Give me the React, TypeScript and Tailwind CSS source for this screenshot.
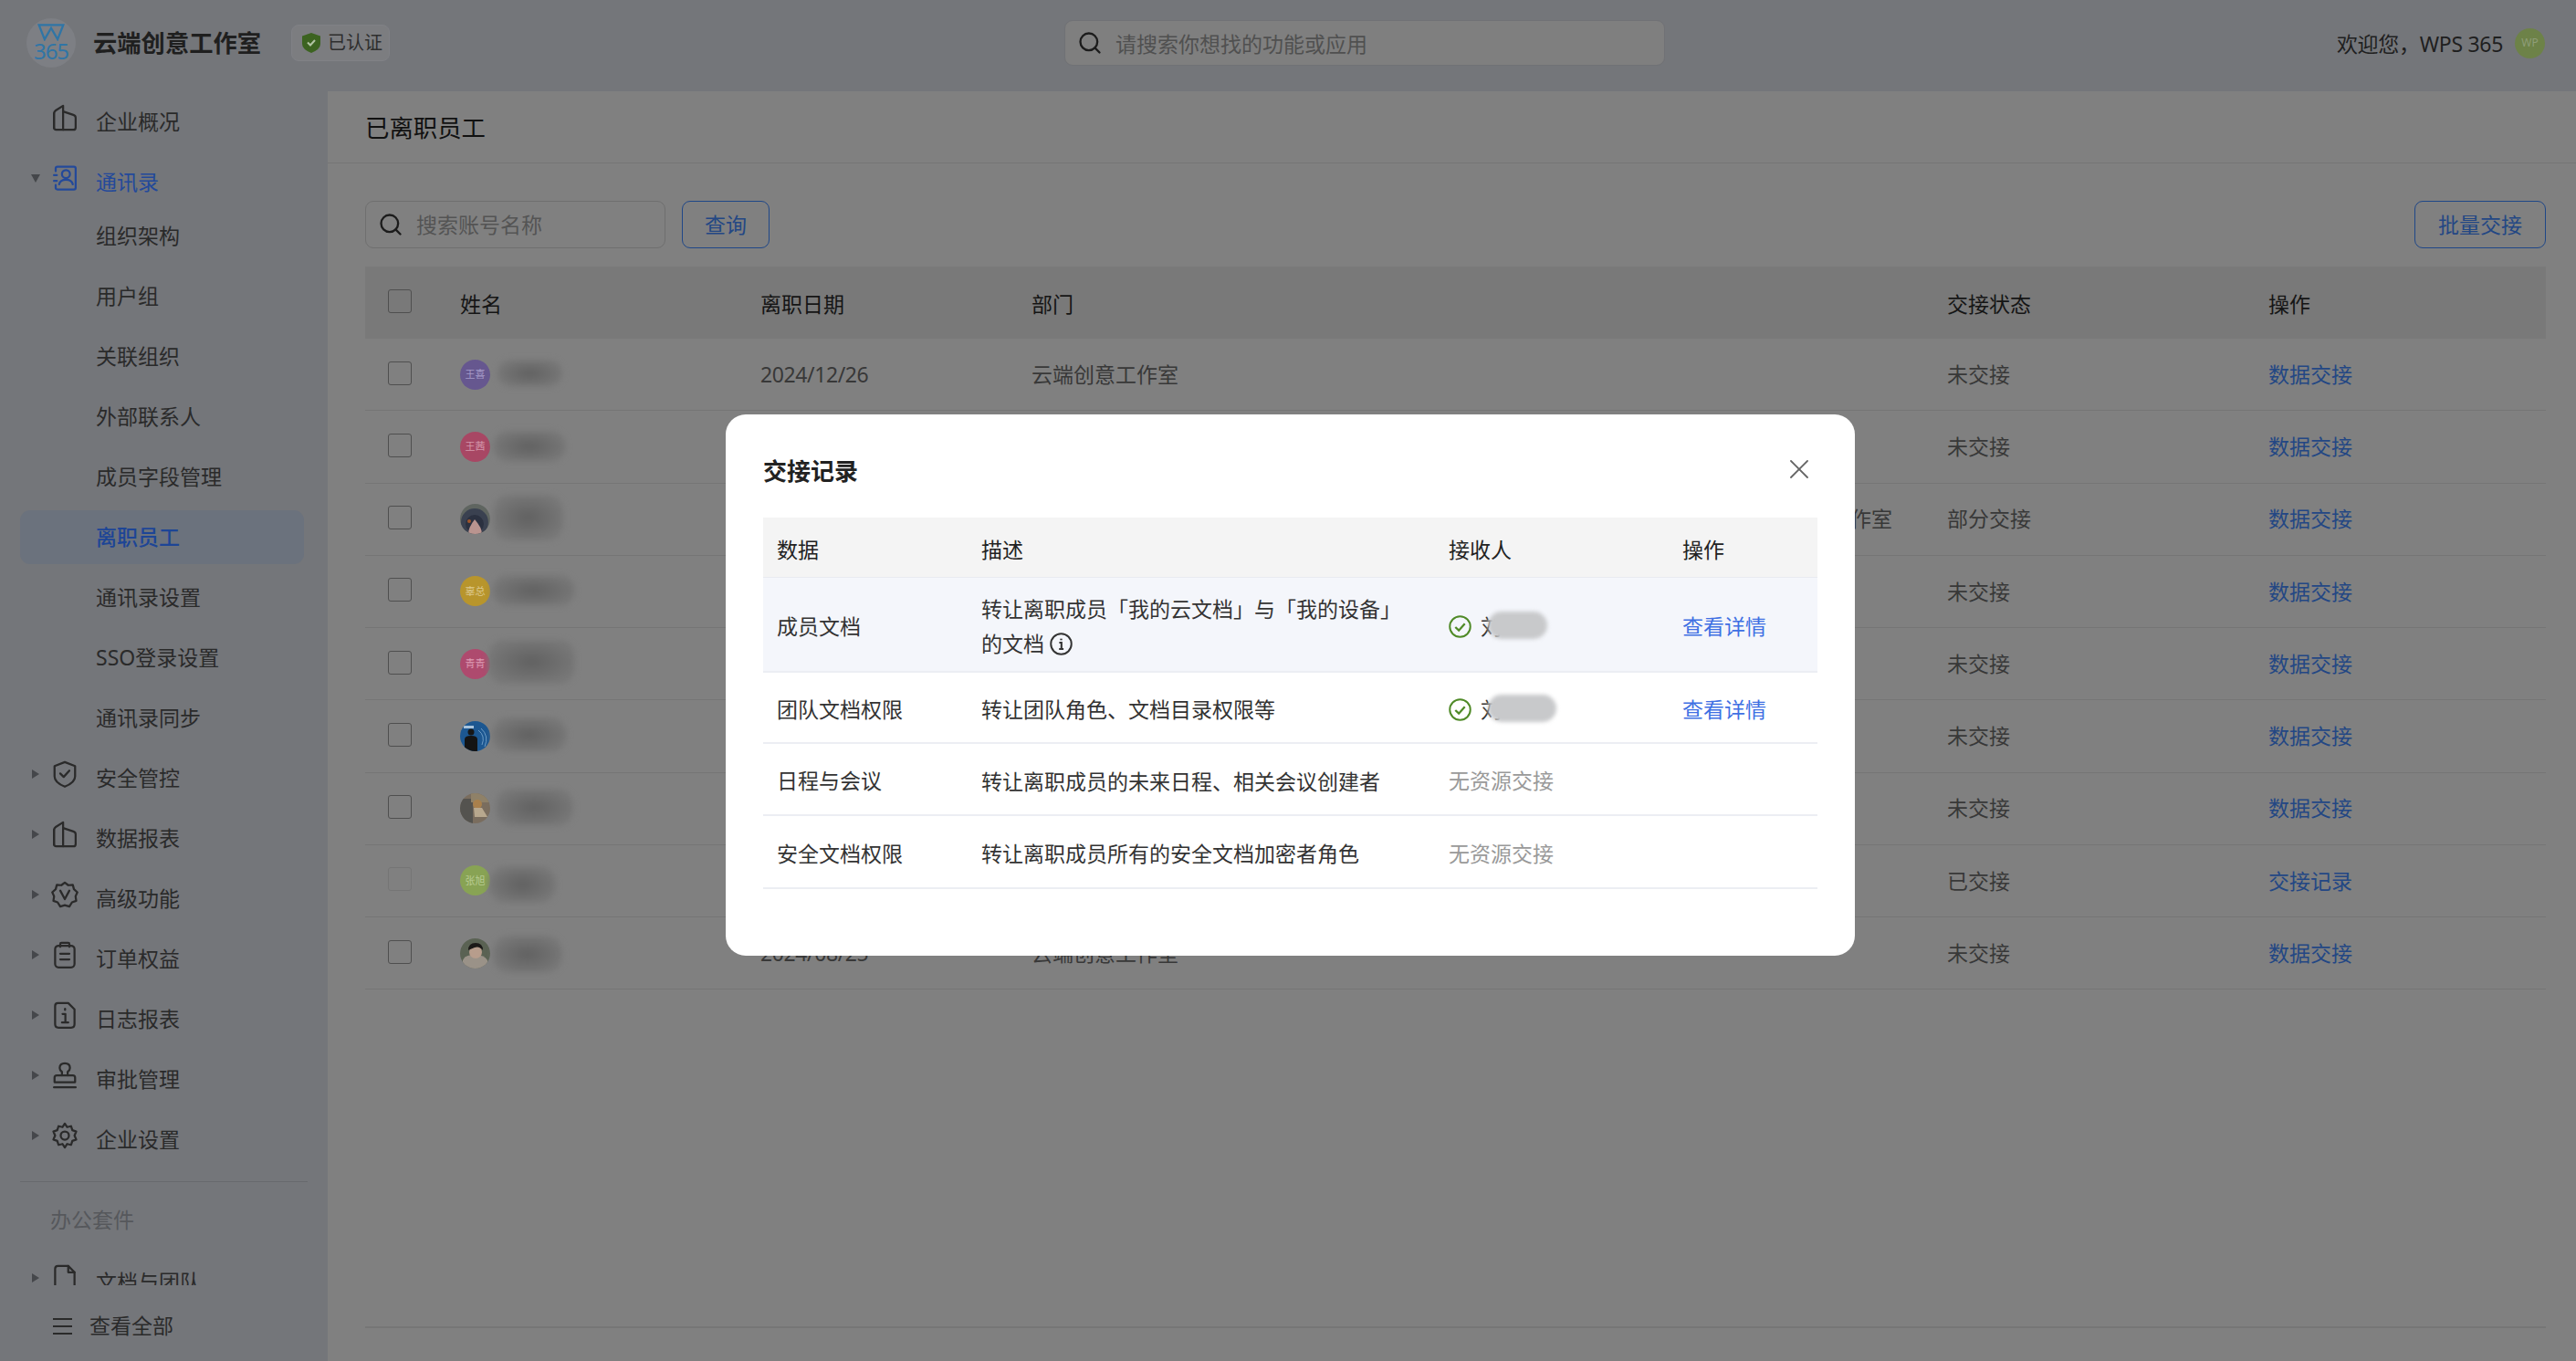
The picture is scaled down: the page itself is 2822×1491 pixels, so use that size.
import React from 'react';
import { Search, X } from 'lucide-react';

const stroke = {
  fill: 'none',
  stroke: 'currentColor',
  strokeWidth: 1.8,
  strokeLinecap: 'round' as const,
  strokeLinejoin: 'round' as const,
};

const Icon: React.FC<{ children: React.ReactNode; className?: string }> = ({ children, className = 'w-[30px] h-[32px]' }) => (
  <svg viewBox="0 0 24 24" className={className} {...stroke}>
    {children}
  </svg>
);

const BuildingIcon = () => (
  <Icon>
    <path d="M2.5 21V8.5Q2.5 6.6 4 5.6L10.5 1.5V22.5" />
    <path d="M10.5 6.5L19.5 9.5Q21.5 10.2 21.5 12V20.5Q21.5 22.5 19.5 22.5H4.5Q2.5 22.5 2.5 20.5V8" />
  </Icon>
);
const ContactIcon = () => (
  <Icon>
    <path d="M4 6V3.5Q4 2 5.5 2H20Q21.5 2 21.5 3.5V20.5Q21.5 22 20 22H5.5Q4 22 4 20.5V18" />
    <circle cx="13" cy="8.5" r="3.5" />
    <path d="M7 17.5Q8 13.5 13 13.5T19 17.5" />
    <path d="M2.5 9.5H5M2.5 14.5H5" />
  </Icon>
);
const ShieldIcon = () => (
  <Icon>
    <path d="M12 1.5L21 5V14Q21 19.5 12 23Q3 19.5 3 14V5Z" />
    <path d="M8 11.5L11 14.5L16 9" />
  </Icon>
);
const BadgeIcon = () => (
  <Icon>
    <path d="M12 1.5L15 3.8L19 3.5L20 7.3L23 10L21.4 13.5L22 17.5L18.3 18.8L16 22.5L12 21.3L8 22.5L5.7 18.8L2 17.5L2.6 13.5L1 10L4 7.3L5 3.5L9 3.8Z" />
    <path d="M8 8.5L12 16L16 8.5" />
  </Icon>
);
const ClipboardIcon = () => (
  <Icon>
    <rect x="3.5" y="4" width="17" height="19" rx="3" />
    <path d="M8 5V2.5Q8 1.5 9 1.5H15Q16 1.5 16 2.5V5" />
    <path d="M8 11H16M8 16H16" />
  </Icon>
);
const LogIcon = () => (
  <Icon>
    <path d="M6 1.5H15L20.5 7V20Q20.5 23 17.5 23H6.5Q3.5 23 3.5 20V4Q3.5 1.5 6 1.5Z" />
    <path d="M10 11H12.5V18M9.5 18.5H15" />
    <path d="M12.2 6.5V7.5" />
  </Icon>
);
const StampIcon = () => (
  <Icon>
    <path d="M9.5 12V9Q7.5 7.5 7.5 5.5Q7.5 1.5 12 1.5T16.5 5.5Q16.5 7.5 14.5 9V12" />
    <path d="M3 18V14Q3 12 5 12H19Q21 12 21 14V18Z" />
    <path d="M2.5 22.5H21.5" />
  </Icon>
);
const GearIcon = () => (
  <Icon>
    <path d="M12 1.5L14 4.6L17.5 3.8L18.6 7.3L22 8.5L20.5 12L22 15.5L18.6 16.7L17.5 20.2L14 19.4L12 22.5L10 19.4L6.5 20.2L5.4 16.7L2 15.5L3.5 12L2 8.5L5.4 7.3L6.5 3.8L10 4.6Z" />
    <circle cx="12" cy="12" r="3.6" />
  </Icon>
);
const DocIcon = () => (
  <Icon>
    <path d="M3.5 23V4Q3.5 1.5 6 1.5H15L20.5 7V23" />
    <path d="M15 1.5V7H20.5" />
    <path d="M9 21H15" />
  </Icon>
);

const BLUE = 'text-[#234784]';

const MainNavRow: React.FC<{
  icon: React.ReactNode;
  label: string;
  open?: boolean;
  arrow?: boolean;
}> = ({ icon, label, open, arrow = true }) => (
  <div className={`flex h-[66px] items-center pl-[33px] text-[23px] ${open ? 'text-[#23499a]' : 'text-[#2a2a2a]'}`}>
    <span className="-mt-[8px] flex w-[12px] justify-center">
      {arrow && open && (
        <span className="h-0 w-0 border-x-[5.5px] border-t-[9px] border-x-transparent border-t-[#45474b]" />
      )}
      {arrow && !open && (
        <span className="h-0 w-0 border-y-[5.5px] border-l-[8px] border-y-transparent border-l-[#45474b]" />
      )}
    </span>
    <span className="-mt-[8px] ml-[11px] flex w-[30px] justify-center">{icon}</span>
    <span className="ml-[19px] whitespace-nowrap">{label}</span>
  </div>
);

const SubNavRow: React.FC<{ label: string; active?: boolean }> = ({ label, active }) => (
  <div className="flex h-[66px] items-center">
    {active ? (
      <div className="mx-[22px] flex h-[59px] w-[311px] items-center rounded-[11px] bg-[#6b727d] pl-[83px] text-[23px] font-medium text-[#1d4596]">
        {label}
      </div>
    ) : (
      <div className="pl-[105px] text-[23px] text-[#2a2a2a]">{label}</div>
    )}
  </div>
);

const Sidebar = () => (
  <aside className="flex w-[359px] shrink-0 flex-col bg-[#74767a]">
    <nav className="h-[1308px] overflow-hidden">
      <MainNavRow icon={<BuildingIcon />} label="企业概况" arrow={false} />
      <MainNavRow icon={<ContactIcon />} label="通讯录" open />
      <div className="-mt-[7px]">
        <SubNavRow label="组织架构" />
        <SubNavRow label="用户组" />
        <SubNavRow label="关联组织" />
        <SubNavRow label="外部联系人" />
        <SubNavRow label="成员字段管理" />
        <SubNavRow label="离职员工" active />
        <SubNavRow label="通讯录设置" />
        <SubNavRow label="SSO登录设置" />
        <SubNavRow label="通讯录同步" />
      </div>
      <MainNavRow icon={<ShieldIcon />} label="安全管控" />
      <MainNavRow icon={<BuildingIcon />} label="数据报表" />
      <MainNavRow icon={<BadgeIcon />} label="高级功能" />
      <MainNavRow icon={<ClipboardIcon />} label="订单权益" />
      <MainNavRow icon={<LogIcon />} label="日志报表" />
      <MainNavRow icon={<StampIcon />} label="审批管理" />
      <MainNavRow icon={<GearIcon />} label="企业设置" />
      <div className="mx-[22px] mt-[13px] border-t border-[#68696d]" />
      <div className="flex h-[76px] items-center pl-[55px] pt-[6px] text-[23px] text-[#56585c]">办公套件</div>
      <MainNavRow icon={<DocIcon />} label="文档与团队" />
    </nav>
    <div className="flex flex-1 items-center pl-[58px] pt-[6px] text-[23px] text-[#2a2a2a]">
      <svg viewBox="0 0 21 20" className="h-[20px] w-[21px]" fill="none" stroke="currentColor" strokeWidth="2.2">
        <path d="M0 2H21M0 10H21M0 18H21" />
      </svg>
      <span className="ml-[19px]">查看全部</span>
    </div>
  </aside>
);

const Header = () => (
  <header className="relative flex h-[100px] shrink-0 items-center bg-[#74767a] pb-[6px] pl-[29px] pr-[34px]">
    <div className="flex h-[54px] w-[54px] flex-col items-center rounded-full bg-[#7d7f84] pt-[6px]">
      <svg viewBox="0 0 30 20" className="h-[19px] w-[30px]" fill="none" stroke="#2f75a6" strokeWidth="2.4">
        <path d="M1 1.5H29L22.5 18L15 5L7.5 18Z" />
      </svg>
      <span className="mt-[-1px] text-[24px] leading-[24px] tracking-[-1px] text-[#2f75a6]">365</span>
    </div>
    <span className="ml-[19px] pt-[2px] text-[26.3px] font-bold text-[#1f1f1f]">云端创意工作室</span>
    <span className="ml-[33px] flex h-[40px] w-[108px] items-center rounded-[8px] border border-[#808186] bg-[#7c7d80] pl-[11px] text-[20px] text-[#2e2e2e]">
      <svg viewBox="0 0 20 22" className="h-[22px] w-[20px]">
        <path d="M10 0L20 3.5V12Q20 18 10 22Q0 18 0 12V3.5Z" fill="#3c6320" />
        <path d="M6 10.5L9 13.5L14 8" fill="none" stroke="#b3c4a4" strokeWidth="2" />
      </svg>
      <span className="ml-[8px]">已认证</span>
    </span>
    <div className="absolute left-[1166px] top-[22px] flex h-[50px] w-[658px] items-center rounded-[9px] border border-[#707175] bg-[#7f7f7f] pl-[13px] text-[23px] text-[#505050]">
      <Search className="h-[28px] w-[28px] text-[#1c1c1c]" strokeWidth={2} />
      <span className="ml-[14px] pt-[2px]">请搜索你想找的功能或应用</span>
    </div>
    <span className="ml-auto pt-[3px] text-[23px] tracking-[-0.3px] text-[#1f1f1f]">欢迎您，WPS 365</span>
    <span className="ml-[13px] flex h-[33px] w-[33px] items-center justify-center rounded-full bg-[#6d8248] text-[12px] text-[#8f9d78]">WP</span>
  </header>
);

const Checkbox: React.FC<{ disabled?: boolean }> = ({ disabled }) => (
  <span className={`block h-[26px] w-[26px] rounded-[3px] border ${disabled ? 'border-[#757575]' : 'border-[#4f4f4f]'}`} />
);

const PhotoAvatar: React.FC<{ kind: string }> = ({ kind }) => (
  <svg viewBox="0 0 33 33" className="h-[33px] w-[33px] shrink-0 rounded-full">
    {kind === 'star' && (
      <>
        <rect width="33" height="33" fill="#5f6560" />
        <circle cx="16" cy="20" r="15" fill="#3a4150" />
        <circle cx="16" cy="22" r="10" fill="#2b3140" />
        <path d="M16 17Q24 26 24 33H9Q9 26 16 17Z" fill="#b9948f" />
        <circle cx="10" cy="19" r="2" fill="#a0552b" />
      </>
    )}
    {kind === 'board' && (
      <>
        <rect width="33" height="33" fill="#1c5791" />
        <path d="M20 10Q28 16 24 26M23 8Q32 16 27 28" fill="none" stroke="#6d9cc5" strokeWidth="1" />
        <circle cx="12" cy="12" r="3.5" fill="#171717" />
        <path d="M5 33V20Q5 16 12 16T19 20V33Z" fill="#141414" />
        <path d="M4 5H15V8H4Z" fill="#a9c3da" />
      </>
    )}
    {kind === 'dog' && (
      <>
        <rect width="33" height="33" fill="#7a6d5e" />
        <rect width="14" height="33" y="6" fill="#54534f" />
        <rect x="12" width="21" height="10" fill="#8f8168" />
        <circle cx="19" cy="12" r="5" fill="#a9804c" />
        <path d="M15 16H24L30 26H16Z" fill="#b8a88e" />
      </>
    )}
    {kind === 'man' && (
      <>
        <rect width="33" height="33" fill="#5a6253" />
        <path d="M3 33V24Q5 18 16 18T30 24V33Z" fill="#9a9288" />
        <circle cx="17" cy="15" r="7" fill="#b79d8c" />
        <path d="M9 13Q9 5 17 5T25 13Q21 8 16 10T9 13Z" fill="#1c1a18" />
      </>
    )}
  </svg>
);

type Row = {
  avatar: React.ReactNode;
  blob: string;
  date: string;
  dept: string;
  status: string;
  action: string;
  disabled?: boolean;
};

const Initials: React.FC<{ text: string; className: string }> = ({ text, className }) => (
  <span className={`flex h-[33px] w-[33px] shrink-0 items-center justify-center rounded-full text-[11px] ${className}`}>{text}</span>
);

const blobBase =
  'shrink-0 rounded-[18px] bg-[radial-gradient(closest-side,#616161,#767676)] blur-[3px]';

const rows: Row[] = [
  { avatar: <Initials text="王喜" className="bg-[#66578f] text-[#a59bc8]" />, blob: 'ml-[8px] mt-[-2px] h-[30px] w-[71px]', date: '2024/12/26', dept: '云端创意工作室', status: '未交接', action: '数据交接' },
  { avatar: <Initials text="王茜" className="bg-[#a84764] text-[#d397aa]" />, blob: 'ml-[3px] mt-[0px] h-[34px] w-[80px]', date: '2024/12/18', dept: '云端创意工作室', status: '未交接', action: '数据交接' },
  { avatar: <PhotoAvatar kind="star" />, blob: 'ml-[3px] mt-[-4px] h-[50px] w-[77px]', date: '2024/11/30', dept: '总部云端创意工作室、云端创意工作室、云端创意工作室、云端创意工作室、云端创意工作室', status: '部分交接', action: '数据交接' },
  { avatar: <Initials text="辜总" className="bg-[#b8952c] text-[#dcc98e]" />, blob: 'ml-[2px] mt-[-2px] h-[34px] w-[91px]', date: '2024/11/12', dept: '云端创意工作室', status: '未交接', action: '数据交接' },
  { avatar: <Initials text="青青" className="bg-[#ae4a6e] text-[#dd9cb4]" />, blob: 'ml-[-2px] mt-[-4px] h-[48px] w-[95px]', date: '2024/10/28', dept: '云端创意工作室', status: '未交接', action: '数据交接' },
  { avatar: <PhotoAvatar kind="board" />, blob: 'ml-[2px] mt-[-2px] h-[38px] w-[82px]', date: '2024/10/09', dept: '云端创意工作室', status: '未交接', action: '数据交接' },
  { avatar: <PhotoAvatar kind="dog" />, blob: 'ml-[6px] mt-[-2px] h-[41px] w-[85px]', date: '2024/09/21', dept: '云端创意工作室', status: '未交接', action: '数据交接' },
  { avatar: <Initials text="张旭" className="bg-[#88a354] text-[#b9cb93]" />, blob: 'ml-[-1px] mt-[8px] h-[40px] w-[73px]', date: '2024/09/03', dept: '云端创意工作室', status: '已交接', action: '交接记录', disabled: true },
  { avatar: <PhotoAvatar kind="man" />, blob: 'ml-[3px] mt-[2px] h-[41px] w-[76px]', date: '2024/08/25', dept: '云端创意工作室', status: '未交接', action: '数据交接' },
];

const LeftStaffPage = () => (
  <main className="flex min-w-0 flex-1 flex-col">
    <div className="flex h-[79px] shrink-0 items-center border-b border-[#757575] pl-[41px] pt-[3px] text-[26.4px] text-[#111111]">
      已离职员工
    </div>
    <div className="flex flex-1 flex-col pl-[41px] pr-[33px]">
      <div className="mt-[41px] flex h-[52px] items-stretch">
        <div className="flex w-[329px] items-center rounded-[9px] border border-[#6f6f6f] pl-[13px] text-[23px] text-[#545454]">
          <Search className="h-[28px] w-[28px] text-[#1c1c1c]" strokeWidth={2} />
          <span className="ml-[14px] pt-[1px]">搜索账号名称</span>
        </div>
        <button className={`ml-[18px] w-[96px] rounded-[9px] border border-[#1f4788] pt-[1px] text-[23px] ${BLUE}`}>查询</button>
        <button className={`ml-auto w-[144px] rounded-[9px] border border-[#1f4788] pt-[1px] text-[23px] ${BLUE}`}>批量交接</button>
      </div>

      <div className="mt-[20px] flex h-[79px] items-center bg-[#797979] pt-[3px] text-[23px] text-[#151515]">
        <span className="flex w-[104px] pb-[6px] pl-[25px]"><Checkbox /></span>
        <span className="w-[329px]">姓名</span>
        <span className="w-[297px]">离职日期</span>
        <span className="w-[1003px]">部门</span>
        <span className="w-[352px]">交接状态</span>
        <span>操作</span>
      </div>

      {rows.map(row => (
        <div key={row.date} className="flex h-[79.25px] items-center border-b border-[#757575] text-[23px] text-[#383838]">
          <span className="flex w-[104px] pb-[3px] pl-[25px]"><Checkbox disabled={row.disabled} /></span>
          <span className="flex w-[329px] items-center">
            {row.avatar}
            <span className={`${blobBase} ${row.blob}`} />
          </span>
          <span className="w-[297px] tracking-[-0.4px]">{row.date}</span>
          <span className="w-[1003px] whitespace-nowrap">{row.dept}</span>
          <span className="w-[352px]">{row.status}</span>
          <span className={BLUE}>{row.action}</span>
        </div>
      ))}

      <div className="mt-auto h-[38px] border-t-2 border-[#767676]" />
    </div>
  </main>
);

const CheckCircle = () => (
  <svg viewBox="0 0 24 24" className="h-[25px] w-[25px] shrink-0" fill="none" stroke="#4f8a27" strokeWidth="1.9">
    <circle cx="12" cy="12" r="10.8" />
    <path d="M7 12.5L10.7 16L17 8.8" strokeWidth="2.2" />
  </svg>
);

const InfoCircle = () => (
  <svg viewBox="0 0 24 24" className="ml-[6px] inline-block h-[25px] w-[25px] align-[-4px]" fill="none" stroke="#333333" strokeWidth="1.9">
    <circle cx="12" cy="12" r="10.8" />
    <path d="M10 10.5H12.3V17M9.8 17.2H14.5" strokeWidth="2" />
    <path d="M12 6.4V8" strokeWidth="2.2" />
  </svg>
);

const Recipient: React.FC<{ blob: string }> = ({ blob }) => (
  <span className="relative flex items-center">
    <CheckCircle />
    <span className="ml-[10px]">刘</span>
    <span className={`absolute left-[43px] top-[1px] h-[30px] rounded-full bg-[#c8c9cb] blur-[2px] ${blob}`} />
  </span>
);

const dialogRows = [
  {
    name: '成员文档',
    h: 'h-[104px] bg-[#f4f6fb]',
    desc: (
      <>
        转让离职成员「我的云文档」与「我的设备」的文档
        <InfoCircle />
      </>
    ),
    recipient: <Recipient blob="w-[65px]" />,
    link: true,
  },
  { name: '团队文档权限', h: 'h-[78px]', desc: '转让团队角色、文档目录权限等', recipient: <Recipient blob="w-[75px]" />, link: true },
  { name: '日程与会议', h: 'h-[79px]', desc: '转让离职成员的未来日程、相关会议创建者', recipient: <span className="text-[#999999]">无资源交接</span> },
  { name: '安全文档权限', h: 'h-[80px]', desc: '转让离职成员所有的安全文档加密者角色', recipient: <span className="text-[#999999]">无资源交接</span> },
];

const HandoverDialog = () => (
  <div className="absolute left-[795px] top-[454px] h-[593px] w-[1237px] rounded-[22px] bg-white px-[41px]">
    <div className="flex h-[113px] items-start justify-between pt-[43px]">
      <span className="text-[26px] font-bold leading-[38px] text-[#222222]">交接记录</span>
      <X className="mr-[2px] mt-[-1px] h-[36px] w-[36px] text-[#666666]" strokeWidth={1.2} />
    </div>
    <div className="flex h-[66px] items-center border-b border-[#e8eaf0] bg-[#f4f4f4] pt-[6px] text-[23px] text-[#222222]">
      <span className="w-[224px] pl-[15px]">数据</span>
      <span className="w-[512px] pl-[15px]">描述</span>
      <span className="w-[256px] pl-[15px]">接收人</span>
      <span className="pl-[15px]">操作</span>
    </div>
    {dialogRows.map(row => (
      <div key={row.name} className={`flex items-center border-b-2 border-[#eceef3] pt-[4px] text-[23px] text-[#333333] ${row.h}`}>
        <span className="w-[224px] pl-[15px]">{row.name}</span>
        <span className="w-[512px] pl-[15px] pr-[16px] leading-[38px]">{row.desc}</span>
        <span className="w-[256px] pl-[15px]">{row.recipient}</span>
        <span className="pl-[15px] text-[#3f70e3]">{row.link ? '查看详情' : ''}</span>
      </div>
    ))}
  </div>
);

export default function App() {
  return (
    <div className="relative flex h-[1491px] w-full flex-col overflow-hidden bg-[#808080] font-['Noto_Sans','Noto_Sans_CJK_SC',sans-serif]">
      <Header />
      <div className="flex min-h-0 flex-1">
        <Sidebar />
        <LeftStaffPage />
      </div>
      <HandoverDialog />
    </div>
  );
}
